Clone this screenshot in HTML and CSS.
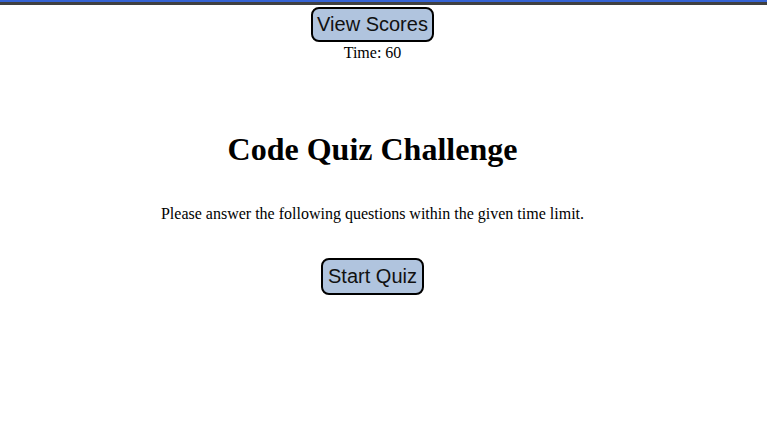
FILE: index.html
```html
<!DOCTYPE html>
<html lang="en">
<head>
<meta charset="utf-8">
<title>Code Quiz</title>
<link rel="stylesheet" href="styles.css">
</head>
<body>
<div class="topbar"></div>
<div class="page">
  <header class="header">
    <button class="btn btn-scores">View Scores</button>
    <div class="timer">Time: 60</div>
  </header>
  <main class="intro">
    <h1 class="title">Code Quiz Challenge</h1>
    <p class="lead">Please answer the following questions within the given time limit.</p>
    <button class="btn btn-start">Start Quiz</button>
  </main>
</div>
</body>
</html>
```

FILE: styles.css
```css
html, body {
  margin: 0;
  padding: 0;
  background: #ffffff;
}
body {
  font-family: "Liberation Serif", "Times New Roman", serif;
  font-size: 16px;
  color: #000;
}
.topbar {
  height: 2px;
  background: #3563d4;
  border-bottom: 3px solid #404040;
}
.page {
  width: 745px;
  text-align: center;
}
.header {
  padding-top: 2px;
  display: flex;
  flex-direction: column;
  align-items: center;
}
.btn {
  font-family: "Liberation Sans", Arial, sans-serif;
  font-size: 20px;
  line-height: 23px;
  color: #111;
  background: #b0c4de;
  border: 2px solid #000;
  border-radius: 8px;
}
.btn-scores {
  padding: 4px 4px;
}
.timer {
  line-height: 18px;
  margin-top: 2px;
}
.intro {
  display: flex;
  flex-direction: column;
  align-items: center;
}
.title {
  font-size: 32px;
  font-weight: bold;
  margin: 69px 0 0;
  line-height: 37px;
}
.lead {
  margin: 37px 0 0;
  line-height: 18px;
}
.btn-start {
  margin-top: 35px;
  padding: 5px 5px;
}
```
